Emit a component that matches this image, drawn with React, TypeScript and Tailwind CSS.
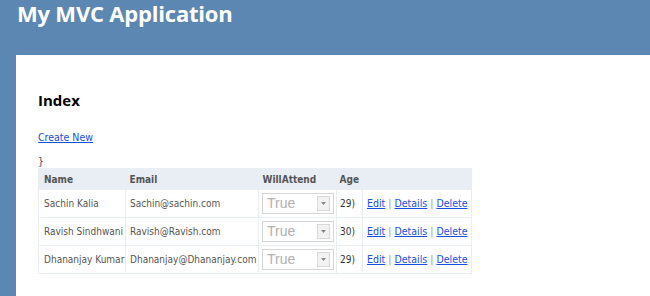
const people = [
  { name: "Sachin Kalia", email: "Sachin@sachin.com", age: "29)" },
  { name: "Ravish Sindhwani", email: "Ravish@Ravish.com", age: "30)" },
  { name: "Dhananjay Kumar", email: "Dhananjay@Dhananjay.com", age: "29)" },
];

const small = "font-['DejaVu_Sans_Condensed','DejaVu_Sans',sans-serif] font-stretch-semi-condensed";

export default function App() {
  return (
    <div className="w-[650px] h-[296px] overflow-hidden bg-[#5c87b2] font-['Open_Sans',sans-serif]">
      {/* Header */}
      <div className="h-[55px] pl-[17px] pt-[1px]">
        <h1 className="text-[22px] leading-[24px] font-bold text-white tracking-[-0.2px]">My MVC Application</h1>
      </div>

      {/* Main */}
      <div className="ml-[16px] bg-white h-[241px] pl-[22px] pt-[35px]">
        <h2 className="text-[15px] leading-[20px] font-bold text-black">Index</h2>
        <div className={`mt-[20px] text-[10.5px] leading-[14px] ${small}`}>
          <a href="#" className="text-[#1a4fe0] underline">Create New</a>
        </div>
        <div className={`mt-[12px] text-[10px] leading-[12px] text-[#444] ${small}`}>{"}"}</div>
        <table className={`table-fixed w-[433px] border-collapse text-[10px] text-[#555] border border-[#e8eef4] ${small}`}>
          <thead>
            <tr className="bg-[#e8eef4] h-[21px] text-left text-[#555]">
              <th className="font-bold px-[5px] w-[87px]">Name</th>
              <th className="font-bold px-[4px] w-[133px]">Email</th>
              <th className="font-bold px-[4px] w-[78px]">WillAttend</th>
              <th className="font-bold px-[3px] w-[26px]">Age</th>
              <th className="w-[109px]"></th>
            </tr>
          </thead>
          <tbody>
            {people.map((p) => (
              <tr key={p.name} className="h-[28px]">
                <td className="px-[5px] border border-[#e8eef4] whitespace-nowrap">{p.name}</td>
                <td className="px-[4px] border border-[#e8eef4] whitespace-nowrap">{p.email}</td>
                <td className="px-[3px] border border-[#e8eef4]">
                  <div className="flex items-center justify-between h-[21px] w-[72px] border border-[#d6d6d6] bg-white pl-[4px] pr-[3px]">
                    <span className="text-[14px] text-[#b0b0b0] font-['Liberation_Sans',sans-serif] font-stretch-normal">True</span>
                    <span className="flex items-center justify-center w-[13px] h-[15px] border border-[#d8d8d8] bg-[#f2f2f2]">
                      <svg width="5" height="3" viewBox="0 0 5 3">
                        <path d="M0 0 H5 L2.5 3 Z" fill="#888" />
                      </svg>
                    </span>
                  </div>
                </td>
                <td className="px-[3px] border border-[#e8eef4] text-[#333]">{p.age}</td>
                <td className="px-[4px] border border-[#e8eef4] whitespace-nowrap text-[#999] text-[10.5px]">
                  <a href="#" className="text-[#1a4fe0] underline">Edit</a>
                  {" | "}
                  <a href="#" className="text-[#1a4fe0] underline">Details</a>
                  {" | "}
                  <a href="#" className="text-[#1a4fe0] underline">Delete</a>
                </td>
              </tr>
            ))}
          </tbody>
        </table>
      </div>
    </div>
  );
}
